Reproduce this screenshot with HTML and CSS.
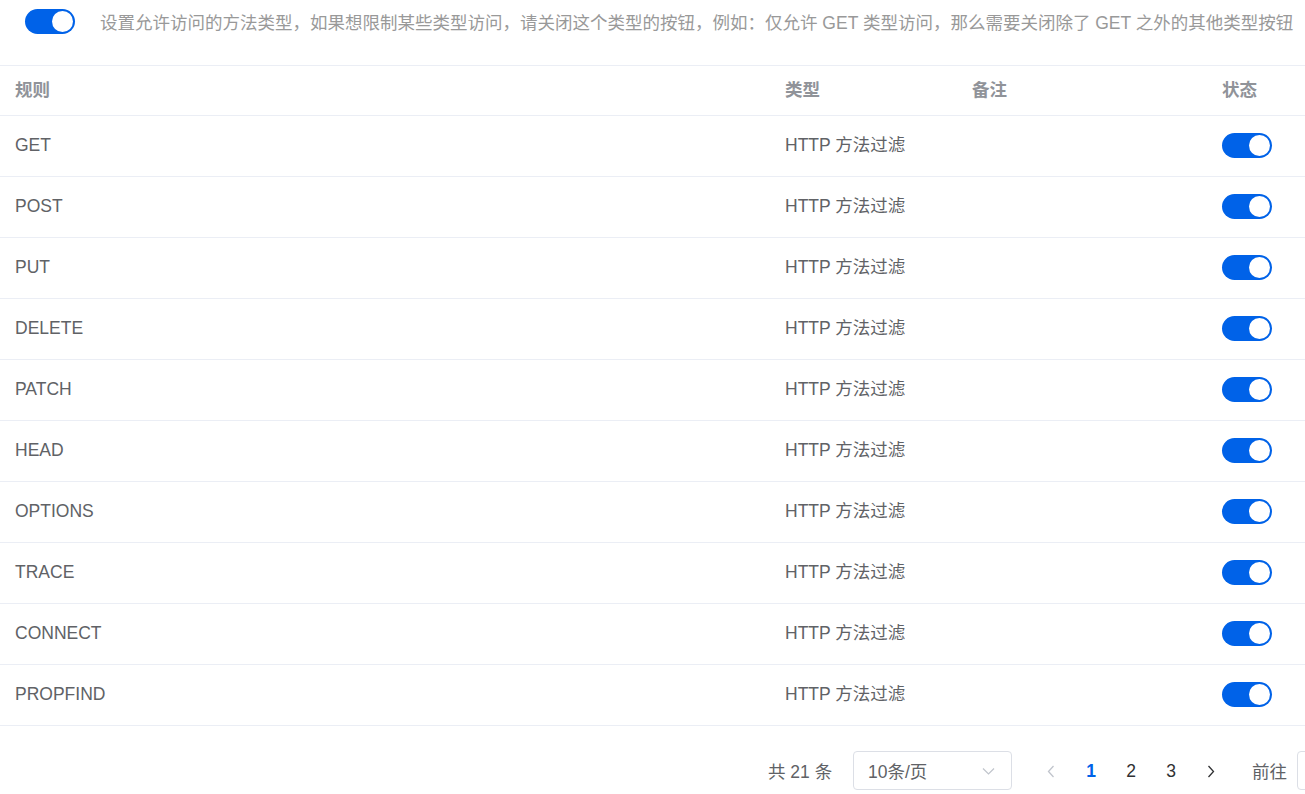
FILE: index.html
```html
<!DOCTYPE html>
<html lang="zh-CN">
<head>
<meta charset="utf-8">
<title>HTTP 方法过滤</title>
<link rel="stylesheet" href="styles.css">
</head>
<body>
<div class="top">
  <span class="switch"><span class="thumb"></span></span>
  <span class="tip">设置允许访问的方法类型，如果想限制某些类型访问，请关闭这个类型的按钮，例如：仅允许 GET 类型访问，那么需要关闭除了 GET 之外的其他类型按钮</span>
</div>
<table class="tbl">
  <colgroup><col class="c1"><col class="c2"><col class="c3"><col class="c4"></colgroup>
  <thead>
    <tr><th>规则</th><th>类型</th><th>备注</th><th>状态</th></tr>
  </thead>
  <tbody>
    <tr><td>GET</td><td>HTTP 方法过滤</td><td></td><td><span class="switch"><span class="thumb"></span></span></td></tr>
    <tr><td>POST</td><td>HTTP 方法过滤</td><td></td><td><span class="switch"><span class="thumb"></span></span></td></tr>
    <tr><td>PUT</td><td>HTTP 方法过滤</td><td></td><td><span class="switch"><span class="thumb"></span></span></td></tr>
    <tr><td>DELETE</td><td>HTTP 方法过滤</td><td></td><td><span class="switch"><span class="thumb"></span></span></td></tr>
    <tr><td>PATCH</td><td>HTTP 方法过滤</td><td></td><td><span class="switch"><span class="thumb"></span></span></td></tr>
    <tr><td>HEAD</td><td>HTTP 方法过滤</td><td></td><td><span class="switch"><span class="thumb"></span></span></td></tr>
    <tr><td>OPTIONS</td><td>HTTP 方法过滤</td><td></td><td><span class="switch"><span class="thumb"></span></span></td></tr>
    <tr><td>TRACE</td><td>HTTP 方法过滤</td><td></td><td><span class="switch"><span class="thumb"></span></span></td></tr>
    <tr><td>CONNECT</td><td>HTTP 方法过滤</td><td></td><td><span class="switch"><span class="thumb"></span></span></td></tr>
    <tr><td>PROPFIND</td><td>HTTP 方法过滤</td><td></td><td><span class="switch"><span class="thumb"></span></span></td></tr>
  </tbody>
</table>
<div class="pager">
  <span class="total">共 21 条</span>
  <span class="select"><span class="sel-text">10条/页</span>
    <svg class="chev" width="13" height="8" viewBox="0 0 13 8"><path d="M1 1.5 L6.5 7 L12 1.5" fill="none" stroke="#c0c4cc" stroke-width="1.2"/></svg>
  </span>
  <span class="btn prev"><svg width="8" height="13" viewBox="0 0 8 13"><path d="M6.5 1 L1.5 6.5 L6.5 12" fill="none" stroke="#c0c4cc" stroke-width="1.3"/></svg></span>
  <span class="num active">1</span>
  <span class="num">2</span>
  <span class="num">3</span>
  <span class="btn next"><svg width="8" height="13" viewBox="0 0 8 13"><path d="M1.5 1 L6.5 6.5 L1.5 12" fill="none" stroke="#303133" stroke-width="1.3"/></svg></span>
  <span class="goto">前往</span>
  <span class="jump"></span>
</div>
</body>
</html>
```
FILE: styles.css
```css
html, body {
  margin: 0;
  padding: 0;
  background: #fff;
  overflow: hidden;
}
body {
  font-family: "Liberation Sans", "Noto Sans CJK SC", sans-serif;
  font-size: 17.5px;
  color: #606266;
  width: 1305px;
  height: 794px;
}
.top {
  display: flex;
  align-items: center;
  height: 42px;
  padding-left: 25px;
  margin-bottom: 23px;
  white-space: nowrap;
}
.tip {
  margin-left: 25px;
  color: #999;
}
.switch {
  position: relative;
  display: inline-block;
  width: 50px;
  height: 25px;
  border-radius: 13px;
  background: #0062e8;
  vertical-align: middle;
  flex: none;
}
.thumb {
  position: absolute;
  top: 2px;
  right: 2px;
  width: 21px;
  height: 21px;
  border-radius: 50%;
  background: #fff;
}
.tbl {
  width: 1305px;
  border-collapse: collapse;
  table-layout: fixed;
  border-top: 1px solid #ebeef5;
}
.c1 { width: 770px; }
.c2 { width: 187px; }
.c3 { width: 250px; }
.c4 { width: 98px; }
.tbl th {
  height: 50px;
  padding: 0 15px 1px;
  box-sizing: border-box;
  line-height: 20px;
  text-align: left;
  font-weight: bold;
  color: #909399;
  border-bottom: 1px solid #ebeef5;
}
.tbl td {
  height: 58px;
  padding: 0 15px 2px;
  line-height: 20px;
  text-align: left;
  border-bottom: 1px solid #ebeef5;
  color: #606266;
}
.tbl td .switch { display: block; margin-top: 1px; }
.pager {
  display: flex;
  align-items: center;
  height: 39px;
  padding: 25px 0 4px 768px;
  white-space: nowrap;
}
.total {
  color: #606266;
  width: 85px;
  flex: none;
}
.select {
  display: flex;
  align-items: center;
  justify-content: space-between;
  box-sizing: border-box;
  width: 159px;
  height: 39px;
  border: 1px solid #dcdfe6;
  border-radius: 4px;
  padding: 0 16px 0 14px;
  margin-right: 19px;
  flex: none;
  color: #606266;
}
.btn, .num {
  display: flex;
  align-items: center;
  justify-content: center;
  width: 40px;
  height: 28px;
  padding-top: 2px;
  flex: none;
  color: #303133;
}
.num.active { color: #0062e8; font-weight: bold; }
.goto {
  margin-left: 21px;
  color: #606266;
  flex: none;
}
.jump {
  display: block;
  margin-left: 10px;
  width: 46px;
  height: 39px;
  box-sizing: border-box;
  border: 1px solid #dcdfe6;
  border-radius: 4px;
  flex: none;
}
```
